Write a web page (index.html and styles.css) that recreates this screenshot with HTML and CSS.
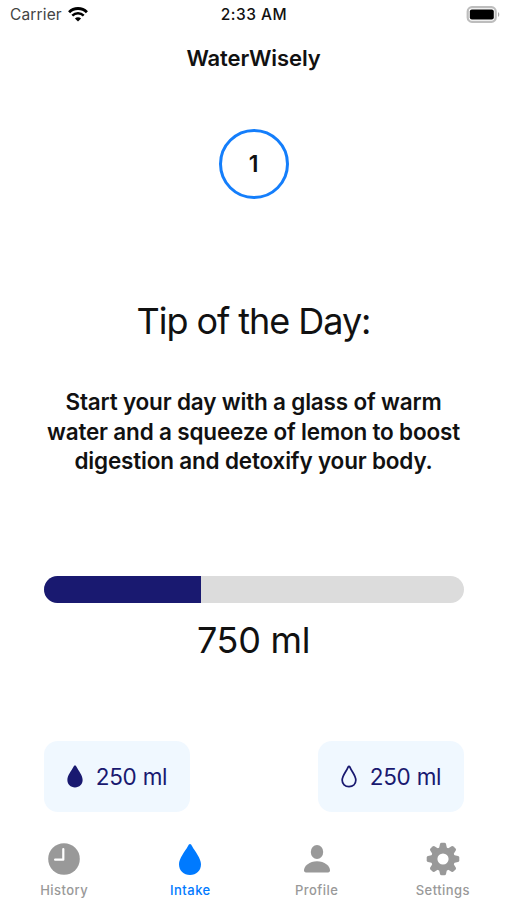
FILE: index.html
```html
<!DOCTYPE html>
<html lang="en">
<head>
  <meta charset="UTF-8">
  <title>WaterWisely</title>
  <link rel="stylesheet" href="styles.css">
</head>
<body>
  <div class="app">
    <div class="status-bar">
      <div class="carrier">
        <span>Carrier</span>
        <svg class="wifi" viewBox="0 0 20 15" width="20" height="15">
          <path d="M1.1 5.2a12.6 12.6 0 0 1 17.8 0" fill="none" stroke="#000" stroke-width="2.9"/>
          <path d="M4.3 8.7a8.1 8.1 0 0 1 11.4 0" fill="none" stroke="#000" stroke-width="2.5"/>
          <path d="M10 14.6 6.9 11.5a4.4 4.4 0 0 1 6.2 0z"/>
        </svg>
      </div>
      <div class="clock">2:33 AM</div>
      <div class="battery-wrap">
        <svg viewBox="0 0 34 17" width="34" height="17">
          <rect x="1.700" y="1.200" width="28" height="14.600" rx="4.200" fill="#fff" stroke="#bdbdbd" stroke-width="2.200"/>
          <rect x="3.800" y="3.400" width="24" height="10.200" rx="2"/>
          <path d="M32 6.200c1.700.5 1.700 4 0 4.500z" fill="#aaa"/>
        </svg>
      </div>
    </div>

    <h1 class="app-title">WaterWisely</h1>

    <div class="streak">1</div>

    <h2 class="tip-title">Tip of the Day:</h2>
    <p class="tip-text">Start your day with a glass of warm<br>water and a squeeze of lemon to boost<br>digestion and detoxify your body.</p>

    <div class="progress">
      <div class="progress-fill" style="width: 37.5%"></div>
    </div>
    <div class="amount">750 ml</div>

    <div class="intake-buttons">
      <button class="intake-btn">
        <svg viewBox="0 0 22 31" width="16" height="23">
          <path d="M11 .5C12 .5 12.500 1.300 13 2.200C16 8 21.500 14 21.500 20.400C21.500 26.500 17 30.500 11 30.500S.5 26.500 .5 20.400C.5 14 6 8 9 2.200C9.500 1.300 10 .5 11 .5z" fill="#191970"/>
        </svg>
        <span>250 ml</span>
      </button>
      <button class="intake-btn">
        <svg viewBox="0 0 22 31" width="16" height="23">
          <path d="M11 1.600C11.700 1.600 12 2.200 12.400 2.900C15 9 20.400 14.500 20.400 20.400C20.400 26 16.400 29.400 11 29.400S1.600 26 1.600 20.400C1.600 14.500 7 9 9.600 2.900C10 2.200 10.300 1.600 11 1.600z" fill="none" stroke="#191970" stroke-width="2.400"/>
        </svg>
        <span>250 ml</span>
      </button>
    </div>

    <nav class="tab-bar">
      <a class="tab">
        <svg viewBox="0 0 34 34" width="34" height="34">
          <circle cx="17" cy="17" r="15.800" fill="#999"/>
          <path d="M16.300 7v10.700H8.100" fill="none" stroke="#fff" stroke-width="2.200" stroke-linecap="round" stroke-linejoin="round"/>
        </svg>
        <span>History</span>
      </a>
      <a class="tab active">
        <svg viewBox="0 0 22 31" width="22" height="31">
          <path d="M11 0C11.900 0 12.400 .8 13 1.900C16 7.500 22 14 22 20.300C22 26.800 17.300 31 11 31S0 26.800 0 20.300C0 14 6 7.500 9 1.900C9.600 .8 10.100 0 11 0z" fill="#007aff"/>
        </svg>
        <span>Intake</span>
      </a>
      <a class="tab">
        <svg viewBox="0 0 34 34" width="34" height="34">
          <ellipse cx="17" cy="10" rx="6.200" ry="6.900" fill="#999"/>
          <path d="M6 30.400c-1.300 0-2-.8-2-2.100C4 24 9.500 19.200 17 19.200S30 24 30 28.300c0 1.300-.7 2.100-2 2.100z" fill="#999"/>
        </svg>
        <span>Profile</span>
      </a>
      <a class="tab">
        <svg viewBox="-17 -17 34 34" width="34" height="34">
          <circle r="8.800" fill="none" stroke="#999" stroke-width="6.400"/>
          <g fill="#999">
            <path id="tooth" d="M-4-10.500-3-15Q-2.700-16.300-1.500-16.300H1.500Q2.700-16.300 3-15L4-10.500z"/>
            <use href="#tooth" transform="rotate(45)"/>
            <use href="#tooth" transform="rotate(90)"/>
            <use href="#tooth" transform="rotate(135)"/>
            <use href="#tooth" transform="rotate(180)"/>
            <use href="#tooth" transform="rotate(225)"/>
            <use href="#tooth" transform="rotate(270)"/>
            <use href="#tooth" transform="rotate(315)"/>
          </g>
        </svg>
        <span>Settings</span>
      </a>
    </nav>
  </div>
</body>
</html>
```
FILE: styles.css
```css
html, body {
  height: 100%;
  margin: 0;
  padding: 0;
  overflow: hidden;
  background-color: #fff;
  font-family: Inter, "Liberation Sans", sans-serif;
}

.app {
  display: flex;
  flex-direction: column;
  align-items: center;
  width: 507px;
  height: 900px;
  color: #111;
}

.status-bar {
  display: grid;
  grid-template-columns: 1fr auto 1fr;
  align-items: center;
  width: 100%;
  height: 29px;
  padding: 0 7px 0 10px;
  box-sizing: border-box;
  font-size: 15.5px;
}

.carrier {
  display: flex;
  align-items: center;
  gap: 6px;
  color: #444;
  letter-spacing: 0.15px;
}

.clock {
  font-weight: 500;
  letter-spacing: 0.5px;
  margin-right: 2px;
}

.battery-wrap {
  display: flex;
  justify-content: flex-end;
}

.app-title {
  margin: 14px 0 0;
  font-size: 22px;
  line-height: 30px;
  font-weight: 600;
  letter-spacing: -0.1px;
}

.streak {
  display: flex;
  align-items: center;
  justify-content: center;
  width: 70px;
  height: 70px;
  margin-top: 56px;
  box-sizing: border-box;
  border: 3px solid #147efb;
  border-radius: 50%;
  font-size: 23px;
  font-weight: 600;
}

.tip-title {
  margin: 100px 0 0;
  font-size: 36px;
  line-height: 44px;
  font-weight: 400;
  letter-spacing: -1.05px;
}

.tip-text {
  margin: 44px 0 0;
  font-size: 22.5px;
  line-height: 29.7px;
  font-weight: 600;
  letter-spacing: -0.18px;
  text-align: center;
  white-space: nowrap;
}

.progress {
  width: 420px;
  height: 27px;
  margin-top: 99.9px;
  border-radius: 14px;
  background-color: #dcdcdc;
  overflow: hidden;
}

.progress-fill {
  height: 100%;
  background-color: #191970;
}

.amount {
  margin-top: 15px;
  font-size: 36px;
  line-height: 44px;
  letter-spacing: -0.3px;
}

.intake-buttons {
  display: flex;
  justify-content: space-between;
  width: 420px;
  margin-top: 79px;
}

.intake-btn {
  display: flex;
  align-items: center;
  justify-content: center;
  gap: 13px;
  width: 146px;
  height: 71px;
  padding: 0 0 0 1px;
  border: none;
  border-radius: 14px;
  background-color: #f0f8ff;
  color: #191970;
  font-family: inherit;
  font-size: 22.5px;
  letter-spacing: -0.25px;
}

.tab-bar {
  display: flex;
  width: 505px;
  margin-top: 30px;
}

.tab {
  display: flex;
  flex: 1;
  flex-direction: column;
  align-items: center;
  color: #999;
  font-size: 13px;
  line-height: 16px;
  font-weight: 500;
  letter-spacing: 0.45px;
}

.tab svg {
  height: 34px;
  margin-bottom: 6px;
}

.tab.active svg {
  height: 31px;
  margin: 2px 0 7px;
}

.tab.active {
  color: #007aff;
}
```
